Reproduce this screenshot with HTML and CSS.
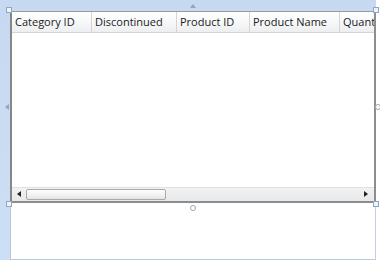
FILE: index.html
```html
<!DOCTYPE html>
<html>
<head>
<meta charset="utf-8">
<link rel="stylesheet" href="styles.css">
</head>
<body>
<div class="root">
  <div class="grid">
    <div class="header">
      <div class="col c1">Category ID</div>
      <div class="col c2">Discontinued</div>
      <div class="col c3">Product ID</div>
      <div class="col c4">Product Name</div>
      <div class="col c5">Quantity</div>
    </div>
    <div class="rows"></div>
    <div class="hscroll">
      <div class="arrow left"></div>
      <div class="track"><div class="thumb"></div></div>
      <div class="arrow right"></div>
    </div>
  </div>
  <div class="below"></div>
  <div class="adorn tri-top"></div>
  <div class="adorn tri-left"></div>
  <div class="adorn sq sq-tl"></div>
  <div class="adorn sq sq-tr"></div>
  <div class="adorn sq sq-bl"></div>
  <div class="adorn sq sq-br"></div>
  <div class="adorn dot dot-bottom"></div>
  <div class="adorn dot dot-right"></div>
</div>
</body>
</html>
```
FILE: styles.css
```css
html, body { margin: 0; padding: 0; background: #ffffff; }
body { width: 380px; height: 263px; overflow: hidden; font-family: "Open Sans", "DejaVu Sans", sans-serif; }
.root {
  position: relative;
  width: 376px; height: 260px;
  box-sizing: border-box;
  padding: 11px 0 0 10px;
  background: linear-gradient(#c6d9f1, #cddff4);
  display: flex; flex-direction: column;
}
.grid {
  height: 192px;
  box-sizing: border-box;
  border: 2px solid #8d8d8d;
  border-top: 1px solid #9a9a9a;
  border-left: 2px solid #868686;
  background: #ffffff;
  display: flex; flex-direction: column;
  overflow: hidden;
}
.header {
  height: 20px;
  display: flex;
  background: linear-gradient(#ffffff 0%, #f7f8f9 50%, #eceef0 100%);
  border-bottom: 1px solid #d5d5d5;
  flex: none;
}
.col {
  flex: none;
  box-sizing: border-box;
  padding-left: 3px;
  font-size: 11px;
  line-height: 20px;
  color: #1a1a1a;
  white-space: nowrap;
  border-right: 1px solid #d5d5d5;
  overflow: hidden;
}
.c1 { width: 80px; }
.c2 { width: 85px; }
.c3 { width: 73px; }
.c4 { width: 90px; }
.c5 { width: 60px; border-right: none; }
.rows { flex: 1; }
.hscroll {
  height: 13px;
  flex: none;
  display: flex;
  background: linear-gradient(#f1f2f3, #e7e8ea);
  border-top: 1px solid #e0e0e0;
}
.arrow { width: 14px; position: relative; flex: none; }
.arrow.left::after {
  content: ""; position: absolute; left: 5px; top: 3px;
  border-top: 3.5px solid transparent; border-bottom: 3.5px solid transparent;
  border-right: 4px solid #222;
}
.arrow.right::after {
  content: ""; position: absolute; left: 4px; top: 3px;
  border-top: 3.5px solid transparent; border-bottom: 3.5px solid transparent;
  border-left: 4px solid #222;
}
.track { flex: 1; padding: 1px 0; box-sizing: border-box; }
.thumb {
  width: 140px; height: 11px; box-sizing: border-box;
  border: 1px solid #a9a9a9; border-radius: 2px;
  background: linear-gradient(#ffffff, #f0f1f2 60%, #e3e4e6);
}
.below {
  flex: 1;
  background: #ffffff;
  border: 1px solid #b9c8dc;
  border-top: none;
  border-right: 1px solid #c2cfe0;
}
.adorn { position: absolute; }
.tri-top {
  left: 190px; top: 4px;
  border-left: 3px solid transparent; border-right: 3px solid transparent;
  border-bottom: 4px solid #8fa6c4;
}
.tri-left {
  left: 5px; top: 104px;
  border-top: 3px solid transparent; border-bottom: 3px solid transparent;
  border-right: 4px solid #8fa6c4;
}
.sq { width: 4px; height: 4px; border: 1px solid #8fa6c4; background: #eef3fa; }
.sq-tl { left: 6px; top: 7px; }
.sq-tr { left: 373px; top: 7px; }
.sq-bl { left: 6px; top: 201px; }
.sq-br { left: 373px; top: 201px; }
.dot { width: 4px; height: 4px; border: 1px solid #9aa7b8; border-radius: 50%; background: #fff; }
.dot-bottom { left: 190px; top: 205px; }
.dot-right { left: 375px; top: 104px; }
```
